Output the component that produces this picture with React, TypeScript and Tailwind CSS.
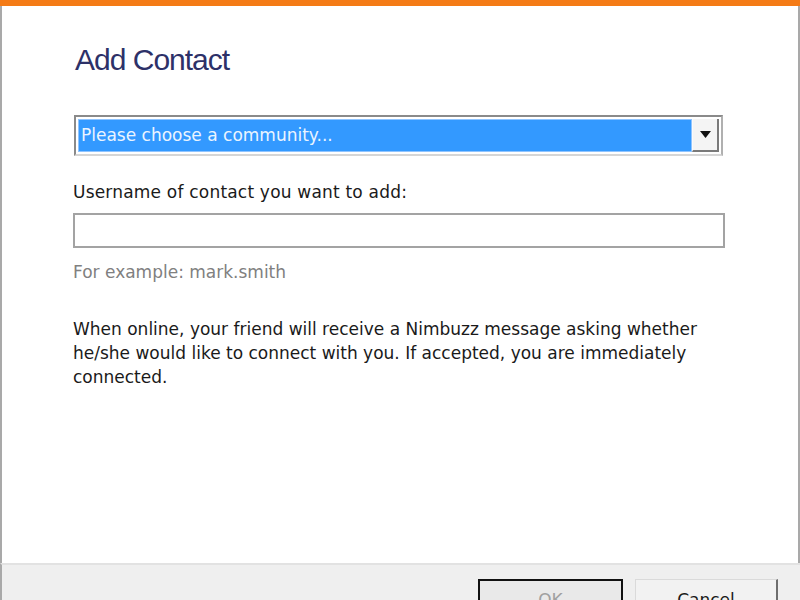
export default function App() {
  return (
    <div
      className="w-[800px] h-[600px] overflow-hidden bg-white flex flex-col text-[#1a1a1a]"
      style={{ fontFamily: '"DejaVu Sans", Verdana, sans-serif' }}
    >
      <div className="h-[6px] bg-[#f47b16] shrink-0" />

      <div className="flex-1 flex flex-col border-l-2 border-r-2 border-[#a9a9a9] pl-[71px] pr-[73px]">
        <h1
          className="mt-[36px] ml-[2px] text-[30px] leading-[36px] tracking-[-1px] text-[#2d3168]"
          style={{ fontFamily: '"Liberation Sans", Arial, sans-serif' }}
        >
          Add Contact
        </h1>

        <div className="mt-[37px] ml-[1px] h-[41px] w-[649px] flex border-2 border-t-[#8a8a8a] border-l-[#8a8a8a] border-b-[#d6d6d6] border-r-[#b0b0b0] bg-white p-[2px]">
          <div className="flex-1 flex items-center bg-[#3399ff] border border-[#8fc4ff] pl-[2px] text-[17px] text-[#eaf4ff]">
            Please choose a community...
          </div>
          <div className="w-[27px] flex items-center justify-center bg-[#f4f4f4] border-r-2 border-b-2 border-[#7a7a7a] border-l border-l-[#fafafa]">
            <svg width="11" height="7" viewBox="0 0 11 7">
              <path d="M0 0h11L5.5 7z" fill="#111" />
            </svg>
          </div>
        </div>

        <div className="mt-[26px] text-[17px] leading-[20px] tracking-[0.2px]">Username of contact you want to add:</div>

        <div className="mt-[11px] h-[35px] w-[652px] border-2 border-[#a3a3a3] bg-white" />

        <div className="mt-[14px] text-[17px] leading-[20px] text-[#808080]">For example: mark.smith</div>

        <p className="mt-[35px] text-[17px] leading-[24px] w-[640px]">
          When online, your friend will receive a Nimbuzz message asking whether he/she would like to connect with you. If accepted, you are immediately connected.
        </p>
      </div>

      <div className="h-[37px] shrink-0 bg-[#efefef] border-t-2 border-[#e2e2e2] border-l-2 border-l-[#a9a9a9] flex items-start justify-end pr-[22px] pt-[14px] gap-[12px]">
        <button className="w-[145px] h-[44px] shrink-0 border-2 border-[#111] bg-[#e9e9e9] text-[17px] text-[#a0a0a0] flex items-center justify-center">
          OK
        </button>
        <button className="w-[143px] h-[44px] shrink-0 border border-[#dadada] border-r-2 border-r-[#6e6e6e] bg-[#f2f2f2] text-[17px] text-[#1a1a1a] flex items-center justify-center">
          Cancel
        </button>
      </div>
    </div>
  );
}
